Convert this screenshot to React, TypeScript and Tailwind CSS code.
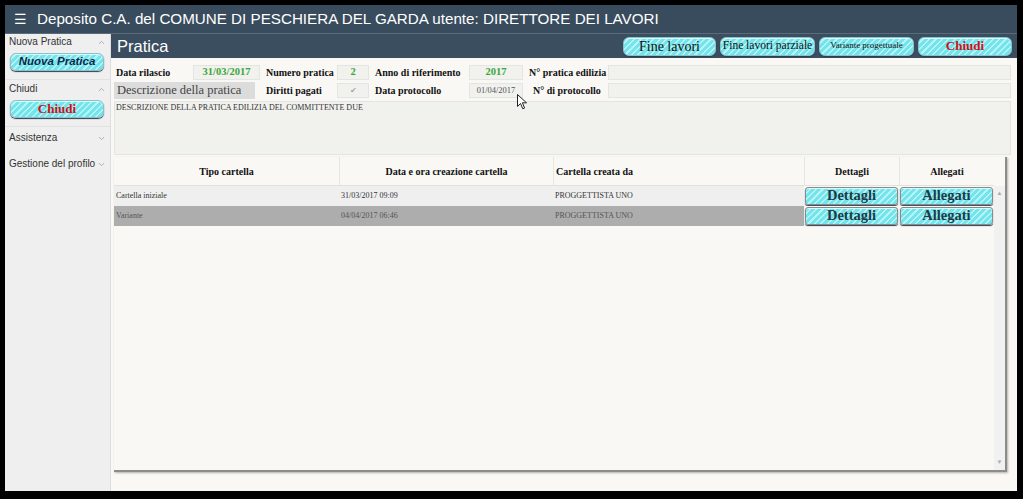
import { ChevronUp, ChevronDown } from "lucide-react";

const stripe =
  "bg-[repeating-linear-gradient(135deg,#74e4ec_0px,#74e4ec_3px,#b4f3f6_3px,#b4f3f6_4.5px)]";

function CyanButton({
  children,
  className = "",
}: {
  children: React.ReactNode;
  className?: string;
}) {
  return (
    <div
      className={`flex items-center justify-center rounded-[6px] border border-[#8cc0c8] shadow-[inset_0_1px_0_#d8fbfc,0_1px_1px_#2d3f4f] ${stripe} ${className}`}
    >
      {children}
    </div>
  );
}

function SideSection({
  label,
  className = "",
  children,
}: {
  label: string;
  className?: string;
  children?: React.ReactNode;
}) {
  return (
    <div className={`border-b border-[#e2e2e2] px-[4px] pb-[8px] ${className}`}>
      <div className="flex items-center justify-between text-[10px] leading-[12px] text-[#333] font-['Liberation_Sans',sans-serif]">
        <span>{label}</span>
        <ChevronUp size={9} className="text-[#999]" />
      </div>
      {children}
    </div>
  );
}

function Box({
  w,
  children,
  className = "",
}: {
  w: string;
  children?: React.ReactNode;
  className?: string;
}) {
  return (
    <div
      className={`flex h-[15px] items-center justify-center border border-[#e4e4e0] bg-[#f1f1ee] ${w} ${className}`}
    >
      {children}
    </div>
  );
}

function Label({ w, children }: { w: string; children: React.ReactNode }) {
  return (
    <div className={`whitespace-nowrap pl-[2px] text-[10px] font-bold text-[#111] ${w}`}>
      {children}
    </div>
  );
}

export default function App() {
  const rows = [
    {
      tipo: "Cartella iniziale",
      data: "31/03/2017 09:09",
      da: "PROGGETTISTA UNO",
      bg: "bg-[#efefef]",
      fg: "text-[#333]",
    },
    {
      tipo: "Variante",
      data: "04/04/2017 06:46",
      da: "PROGGETTISTA UNO",
      bg: "bg-[#adadad]",
      fg: "text-[#555]",
    },
  ];

  return (
    <div className="h-[499px] w-[1023px] bg-black pb-[8px] pl-[5px] pr-[6px] pt-[5px]">
      <div className="flex h-full flex-col bg-[#f9f8f4]">
        {/* header */}
        <div className="flex h-[29px] shrink-0 items-center gap-[10px] border-b border-[#5b6b7a] bg-[#394c5e] pl-[9px] text-[15.2px] text-white font-['Liberation_Sans',sans-serif]">
          <span className="text-[14px]">☰</span>
          <span>Deposito C.A. del COMUNE DI PESCHIERA DEL GARDA utente: DIRETTORE DEI LAVORI</span>
        </div>

        <div className="flex min-h-0 flex-1">
          {/* sidebar */}
          <div className="w-[106px] shrink-0 border-r border-[#dedede] bg-[#efefef]">
            <SideSection label="Nuova Pratica" className="pt-[2px]">
              <CyanButton className="mt-[5px] ml-[1px] h-[18px] w-[94px]">
                <span className="text-[11.5px] font-bold italic text-[#0d2a4a] font-['Liberation_Sans',sans-serif]">
                  Nuova Pratica
                </span>
              </CyanButton>
            </SideSection>
            <SideSection label="Chiudi" className="pt-[3px]">
              <CyanButton className="mt-[5px] ml-[1px] h-[18px] w-[94px]">
                <span className="text-[13px] font-bold text-[#d0121b] font-['Liberation_Serif',serif]">
                  Chiudi
                </span>
              </CyanButton>
            </SideSection>
            <div className="px-[4px] pt-[5px]">
              <div className="flex items-center justify-between text-[10px] leading-[12px] text-[#333] font-['Liberation_Sans',sans-serif]">
                <span>Assistenza</span>
                <ChevronDown size={9} className="text-[#999]" />
              </div>
              <div className="mt-[14px] flex items-center justify-between text-[10px] leading-[12px] text-[#333] font-['Liberation_Sans',sans-serif]">
                <span>Gestione del profilo</span>
                <ChevronDown size={9} className="text-[#999]" />
              </div>
            </div>
          </div>

          {/* main */}
          <div className="relative flex min-w-0 flex-1 flex-col font-['Liberation_Serif',serif]">
            <div className="flex h-[24px] shrink-0 items-center justify-between bg-[#3b4e60] pl-[6px] pr-[5px]">
              <span className="text-[16.5px] text-white font-['Liberation_Sans',sans-serif]">Pratica</span>
              <div className="flex gap-[4px]">
                <CyanButton className="h-[19px] w-[93px]">
                  <span className="text-[14px] text-[#111]">Fine lavori</span>
                </CyanButton>
                <CyanButton className="h-[19px] w-[95px]">
                  <span className="whitespace-nowrap text-[11.5px] text-[#111]">Fine lavori parziale</span>
                </CyanButton>
                <CyanButton className="h-[19px] w-[95px]">
                  <span className="whitespace-nowrap text-[9px] text-[#111]">Variante progettuale</span>
                </CyanButton>
                <CyanButton className="h-[19px] w-[94px]">
                  <span className="text-[13px] font-bold text-[#d0121b]">Chiudi</span>
                </CyanButton>
              </div>
            </div>

            <div className="pl-[3px] pr-[6px] pt-[6px]">
              <div className="flex h-[16px] items-center gap-[4px]">
                <Label w="w-[75px]">Data rilascio</Label>
                <Box w="w-[67px]">
                  <span className="text-[10.5px] font-bold text-[#3aa63a]">31/03/2017</span>
                </Box>
                <Label w="w-[69px]">Numero pratica</Label>
                <Box w="w-[32px]">
                  <span className="text-[10.5px] font-bold text-[#3aa63a]">2</span>
                </Box>
                <Label w="w-[92px]">Anno di riferimento</Label>
                <Box w="w-[54px]">
                  <span className="text-[10.5px] font-bold text-[#3aa63a]">2017</span>
                </Box>
                <Label w="w-[77px]">N° pratica edilizia</Label>
                <Box w="flex-1" />
              </div>
              <div className="mt-[2px] flex h-[17px] items-center gap-[4px]">
                <div className="w-[146px]">
                  <div className="flex h-[17px] w-[141px] items-center bg-[#dcdcdc] pl-[3px] text-[12.5px] text-[#444]">
                    Descrizione della pratica
                  </div>
                </div>
                <Label w="w-[69px]">Diritti pagati</Label>
                <Box w="w-[32px]">
                  <span className="text-[8px] text-[#aaa]">✔</span>
                </Box>
                <Label w="w-[92px]">Data protocollo</Label>
                <Box w="w-[54px]">
                  <span className="text-[8.5px] text-[#555]">01/04/2017</span>
                </Box>
                <div className="w-[77px] whitespace-nowrap pl-[6px] text-[10px] font-bold text-[#111]">
                  N° di protocollo
                </div>
                <Box w="flex-1" />
              </div>
              <div className="mt-[2px] h-[54px] border border-[#e4e4e0] bg-[#f1f1ee] pl-[1px] pt-[1px] text-[8px] leading-[10px] text-[#333]">
                DESCRIZIONE DELLA PRATICA EDILIZIA DEL COMMITTENTE DUE
              </div>
            </div>

            {/* table card */}
            <div className="ml-[3px] mt-[2px] flex h-[315px] w-[893px] border-b-2 border-r-2 border-[#8c8c8a] bg-[#f9f8f4] shadow-[1px_1px_2px_#b0b0ae]">
              <div className="flex-1">
                <div className="flex h-[29px] items-center border-b border-[#e0e0dc] text-[10px] font-bold leading-[29px] text-[#111]">
                  <div className="w-[225px] text-center">Tipo cartella</div>
                  <div className="w-[214px] border-l border-[#e6e6e2] text-center">
                    Data e ora creazione cartella
                  </div>
                  <div className="w-[251px] border-l border-[#e6e6e2] pl-[2px]">Cartella creata da</div>
                  <div className="w-[95px] border-l border-[#e6e6e2] text-center">Dettagli</div>
                  <div className="w-[95px] border-l border-[#e6e6e2] text-center">Allegati</div>
                </div>
                {rows.map((r) => (
                  <div key={r.tipo} className={`flex h-[20px] items-center text-[8px] ${r.bg} ${r.fg}`}>
                    <div className="w-[225px] pl-[2px]">{r.tipo}</div>
                    <div className="w-[214px] pl-[2px]">{r.data}</div>
                    <div className="w-[251px] pl-[2px]">{r.da}</div>
                    <div className="w-[95px] bg-[#f9f8f4] p-[1px]">
                      <CyanButton className="h-[18px] w-full !rounded-[3px] !border-[#8a8a8a]">
                        <span className="text-[14.5px] font-bold text-[#1d3b47]">Dettagli</span>
                      </CyanButton>
                    </div>
                    <div className="w-[95px] bg-[#f9f8f4] p-[1px]">
                      <CyanButton className="h-[18px] w-full !rounded-[3px] !border-[#8a8a8a]">
                        <span className="text-[14.5px] font-bold text-[#1d3b47]">Allegati</span>
                      </CyanButton>
                    </div>
                  </div>
                ))}
              </div>
              <div className="mt-[29px] flex w-[12px] flex-col items-center justify-between bg-[#f1f1f1] py-[3px] text-[6px] text-[#aaa]">
                <span>▲</span>
                <span>▼</span>
              </div>
            </div>

            {/* mouse cursor */}
            <svg
              className="absolute left-[406px] top-[60px]"
              width="11"
              height="16"
              viewBox="0 0 11 16"
            >
              <path
                d="M0.5 0.5 L0.5 12.5 L3.5 9.5 L5.8 14.8 L7.6 14 L5.4 8.8 L9.5 8.8 Z"
                fill="#fff"
                stroke="#222"
                strokeWidth="1"
              />
            </svg>
          </div>
        </div>
      </div>
    </div>
  );
}
